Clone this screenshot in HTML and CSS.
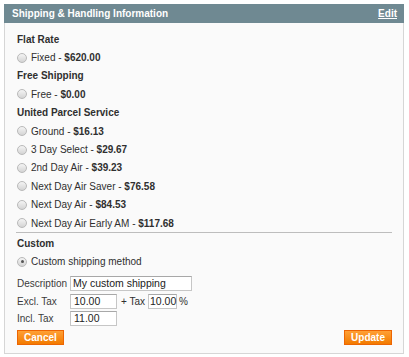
FILE: index.html
```html
<!DOCTYPE html>
<html>
<head>
<meta charset="utf-8">
<link rel="stylesheet" href="styles.css">
</head>
<body>
<div class="panel">
  <div class="head">
    <span class="title">Shipping &amp; Handling Information</span>
    <a class="edit">Edit</a>
  </div>
  <div class="body">
    <div class="row heading">Flat Rate</div>
    <div class="row"><span class="radio"></span>Fixed - <b>$620.00</b></div>
    <div class="row heading">Free Shipping</div>
    <div class="row"><span class="radio"></span>Free - <b>$0.00</b></div>
    <div class="row heading">United Parcel Service</div>
    <div class="row"><span class="radio"></span>Ground - <b>$16.13</b></div>
    <div class="row"><span class="radio"></span>3 Day Select - <b>$29.67</b></div>
    <div class="row"><span class="radio"></span>2nd Day Air - <b>$39.23</b></div>
    <div class="row"><span class="radio"></span>Next Day Air Saver - <b>$76.58</b></div>
    <div class="row"><span class="radio"></span>Next Day Air - <b>$84.53</b></div>
    <div class="row"><span class="radio"></span>Next Day Air Early AM - <b>$117.68</b></div>
    <div class="sep"></div>
    <div class="row heading">Custom</div>
    <div class="row"><span class="radio checked"></span>Custom shipping method</div>
    <div class="form">
      <div class="frow"><span class="lbl">Description</span><span class="inp w-desc">My custom shipping</span></div>
      <div class="frow"><span class="lbl">Excl. Tax</span><span class="inp w-amt">10.00</span><span class="plus">+ Tax</span><span class="inp w-tax">10.00</span><span class="pct">%</span></div>
      <div class="frow"><span class="lbl">Incl. Tax</span><span class="inp w-amt">11.00</span></div>
    </div>
    <div class="actions">
      <span class="btn">Cancel</span>
      <span class="btn">Update</span>
    </div>
  </div>
</div>
</body>
</html>
```
FILE: styles.css
```css
html, body {
  margin: 0;
  padding: 0;
  background: #ffffff;
}
body {
  font-family: "Liberation Sans", Arial, sans-serif;
  font-size: 10px;
  color: #2f2f2f;
}
.panel {
  margin: 4px 5px 0 4px;
  width: 400px;
}
.head {
  height: 19px;
  background: #6f8992;
  display: flex;
  justify-content: space-between;
  align-items: center;
  padding: 0 7px 0 8px;
  color: #ffffff;
  font-weight: bold;
  line-height: 19px;
}
.edit {
  text-decoration: underline;
}
.body {
  background: #fafafa;
  border: 1px solid #d6d6d6;
  border-top: none;
  padding: 7px 11px 8px 12px;
}
.row {
  height: 18.4px;
  display: flex;
  align-items: center;
  white-space: pre;
}
.row b {
  font-weight: bold;
}
.heading {
  font-weight: bold;
}
.radio {
  width: 10px;
  height: 10px;
  border-radius: 50%;
  box-sizing: border-box;
  border: 1px solid #b9b9b9;
  background: linear-gradient(#f4f4f4, #d4d4d4);
  margin-right: 4px;
  position: relative;
}
.radio.checked::after {
  content: "";
  position: absolute;
  left: 2.5px;
  top: 2.5px;
  width: 3px;
  height: 3px;
  border-radius: 50%;
  background: #555;
}
.sep {
  height: 0;
  border-top: 1px solid #bdbdbd;
  margin: 0 0 1px -1px;
}
.form {
  margin-top: 4px;
}
.frow {
  height: 17.5px;
  display: flex;
  align-items: center;
}
.lbl {
  width: 53px;
  color: #3a3a3a;
}
.inp {
  height: 15px;
  box-sizing: border-box;
  border: 1px solid #c6c6c6;
  border-top-color: #a8a8a8;
  background: #ffffff;
  font-size: 10.5px;
  line-height: 13px;
  padding: 0 2px;
  color: #222;
}
.w-desc { width: 122px; }
.w-amt { width: 47px; padding-left: 3px; }
.w-tax { width: 29px; padding: 0 1px; }
.plus { margin: 0 3px 0 4px; }
.pct { margin-left: 2px; }
.actions {
  margin-top: 2px;
  display: flex;
  justify-content: space-between;
}
.btn {
  height: 15px;
  box-sizing: border-box;
  line-height: 13px;
  padding: 0 6px;
  border: 1px solid #ed6502;
  background: linear-gradient(#ffa036, #f27a00);
  color: #ffffff;
  font-weight: bold;
}
```
